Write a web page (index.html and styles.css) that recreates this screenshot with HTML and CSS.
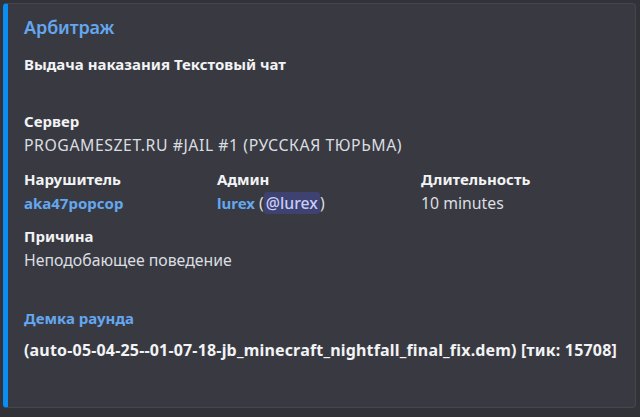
FILE: index.html
```html
<!DOCTYPE html>
<html lang="ru">
<head>
<meta charset="utf-8">
<link rel="stylesheet" href="styles.css">
</head>
<body>
<div class="embed">
  <div class="title">Арбитраж</div>
  <div class="desc">Выдача наказания Текстовый чат</div>
  <div class="field field-server">
    <div class="fname">Сервер</div>
    <div class="fvalue caps">PROGAMESZET.RU #JAIL #1 (РУССКАЯ ТЮРЬМА)</div>
  </div>
  <div class="inline-row">
    <div class="field">
      <div class="fname">Нарушитель</div>
      <div class="fvalue"><span class="link">aka47popcop</span></div>
    </div>
    <div class="field">
      <div class="fname">Админ</div>
      <div class="fvalue"><span class="link">lurex</span> (<span class="mention">@lurex</span>)</div>
    </div>
    <div class="field">
      <div class="fname">Длительность</div>
      <div class="fvalue">10 minutes</div>
    </div>
  </div>
  <div class="field field-reason">
    <div class="fname">Причина</div>
    <div class="fvalue">Неподобающее поведение</div>
  </div>
  <div class="field field-demo">
    <div class="fname blue">Демка раунда</div>
    <div class="fvalue strong">(auto-05-04-25--01-07-18-jb_minecraft_nightfall_final_fix.dem) [тик: 15708]</div>
  </div>
</div>
</body>
</html>
```

FILE: styles.css
```css
html, body {
  margin: 0;
  padding: 0;
  background: #323339;
  width: 640px;
  height: 417px;
  overflow: hidden;
}
body {
  padding: 3px 4px 0 3px;
  box-sizing: border-box;
  font-family: "Noto Sans", "Open Sans", sans-serif;
  color: #dbdee1;
}
.embed {
  box-sizing: border-box;
  height: 405px;
  background: #393a41;
  border: 1px solid #45464d;
  border-left: 5px solid #0b8ef3;
  border-radius: 4px;
  padding: 11px 16px 0 16px;
}
.title {
  font-size: 18px;
  font-weight: 600;
  line-height: 24px;
  letter-spacing: -0.1px;
  color: #64a7f0;
}
.desc {
  margin-top: 13px;
  font-size: 15px;
  font-weight: 700;
  line-height: 24px;
  color: #f2f3f5;
}
.field-server {
  margin-top: 33px;
}
.fname {
  font-size: 15px;
  font-weight: 700;
  line-height: 24px;
  color: #f2f3f5;
}
.fvalue {
  font-size: 15.8px;
  font-weight: 400;
  line-height: 24px;
  color: #dbdee1;
}
.caps {
  letter-spacing: 0.55px;
}
.inline-row {
  margin-top: 10px;
  display: grid;
  grid-template-columns: 193px 204px 1fr;
}
.field-reason {
  margin-top: 9px;
}
.field-demo {
  margin-top: 34px;
}
.field-demo .fvalue {
  margin-top: 8px;
}
.blue {
  color: #64a7f0;
}
.strong {
  font-size: 16px;
  font-weight: 700;
  letter-spacing: 0.18px;
  color: #f2f3f5;
}
.link {
  color: #64a7f0;
  font-weight: 700;
  font-size: 15px;
}
.mention {
  background: #3d4270;
  color: #c9cdfb;
  border-radius: 3px;
  padding: 0 2px;
  font-weight: 500;
}
```
